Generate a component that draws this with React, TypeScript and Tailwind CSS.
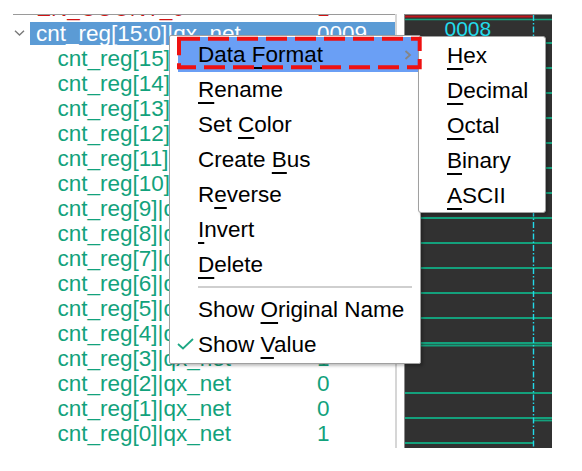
import React from "react";

type Sig = { name: string; value: string };

const bits: Sig[] = [
  { name: "cnt_reg[15]|qx_net", value: "0" },
  { name: "cnt_reg[14]|qx_net", value: "0" },
  { name: "cnt_reg[13]|qx_net", value: "0" },
  { name: "cnt_reg[12]|qx_net", value: "0" },
  { name: "cnt_reg[11]|qx_net", value: "0" },
  { name: "cnt_reg[10]|qx_net", value: "0" },
  { name: "cnt_reg[9]|qx_net", value: "0" },
  { name: "cnt_reg[8]|qx_net", value: "0" },
  { name: "cnt_reg[7]|qx_net", value: "0" },
  { name: "cnt_reg[6]|qx_net", value: "0" },
  { name: "cnt_reg[5]|qx_net", value: "0" },
  { name: "cnt_reg[4]|qx_net", value: "0" },
  { name: "cnt_reg[3]|qx_net", value: "1" },
  { name: "cnt_reg[2]|qx_net", value: "0" },
  { name: "cnt_reg[1]|qx_net", value: "0" },
  { name: "cnt_reg[0]|qx_net", value: "1" },
];

// y of the low level line for each bit that stays 0
const lows = [68, 93, 118, 143, 168, 193, 218, 243, 268, 293, 318, 343, 393, 418];

function Mn({ children }: { children: React.ReactNode }) {
  return <span className="underline underline-offset-[5px] decoration-[1.6px]">{children}</span>;
}

function Item({ children, active }: { children: React.ReactNode; active?: boolean }) {
  return (
    <div
      className={`relative h-[35px] leading-[35px] whitespace-nowrap ${
        active ? "ml-[8px] pl-[20px] bg-[#6a9ff5]" : "pl-[28px]"
      }`}
    >
      {children}
    </div>
  );
}

function SignalList() {
  return (
    <div className="ml-[13px] w-[382px] border-t border-[#9a9a9a] overflow-hidden">
      <div className="-mt-[19px] text-[22.5px] leading-[25px]">
        <div className="h-[25px] flex text-[#d01414]">
          <div className="w-[304px] pl-[23px] whitespace-nowrap">EN_COUNT_0</div>
          <div>1</div>
        </div>
        <div className="h-[25px] py-[1px] flex">
          <div className="w-[17px] pl-[1px] pt-[8px]">
            <svg width="11" height="6" viewBox="0 0 11 6">
              <polyline points="1,0.8 5.5,5 10,0.8" fill="none" stroke="#7a7a7a" strokeWidth="1.4" />
            </svg>
          </div>
          <div className="flex-1 flex bg-[#5b9bd5] text-white leading-[23px]">
            <div className="w-[287px] pl-[6px] whitespace-nowrap">cnt_reg[15:0]|qx_net</div>
            <div>0009</div>
          </div>
        </div>
        {bits.map((b) => (
          <div key={b.name} className="h-[25px] flex text-[#12a27c]">
            <div className="w-[304px] pl-[44.5px] whitespace-nowrap">{b.name}</div>
            <div>{b.value}</div>
          </div>
        ))}
      </div>
    </div>
  );
}

function Waveform() {
  return (
    <div className="relative ml-[7px] w-[148px] bg-[#313131] border-t border-l border-[#8a8a8a] overflow-hidden">
      <svg className="absolute inset-0" width="147" height="433" viewBox="405 15 147 433">
        <line x1="405" y1="16.5" x2="533" y2="16.5" stroke="#c0161c" strokeWidth="2" />
        <line x1="405" y1="19.5" x2="552" y2="19.5" stroke="#14a07c" strokeWidth="1.6" />
        <line x1="405" y1="43" x2="552" y2="43" stroke="#14a07c" strokeWidth="1.8" />
        {lows.map((y) => (
          <line key={y} x1="405" y1={y} x2="552" y2={y} stroke="#14a07c" strokeWidth="1.8" />
        ))}
        <line x1="405" y1="345.5" x2="552" y2="345.5" stroke="#14a07c" strokeWidth="1.8" />
        <line x1="405" y1="443" x2="533" y2="443" stroke="#14a07c" strokeWidth="1.8" />
        <line x1="533" y1="420.5" x2="552" y2="420.5" stroke="#14a07c" strokeWidth="1.8" />
        <line x1="533.5" y1="15" x2="533.5" y2="448" stroke="#22d8e8" strokeWidth="1.4" strokeDasharray="6 2 1.5 2" />
      </svg>
      <div className="absolute left-[39.5px] top-[3px] text-[21px] leading-[21px] text-[#22dcec]">0008</div>
    </div>
  );
}

export default function App() {
  return (
    <div className="relative w-[582px] h-[471px] bg-white overflow-hidden font-['Liberation_Sans',Arial,sans-serif]">
      <div className="flex h-[448px] pt-[14px]">
        <SignalList />
        <div className="w-[2px] bg-[#d6d6d6]" />
        <Waveform />
      </div>

      {/* context menu */}
      <div className="absolute left-[169px] top-[35px] w-[252px] h-[329px] pt-[1px] bg-white border border-[#a0a0a0] rounded-[2px] shadow-[2px_2px_3px_rgba(0,0,0,0.25)] text-[22.5px] text-black">
        <Item active>
          Data <Mn>F</Mn>ormat
          <svg className="absolute left-[226px] top-[13px]" width="8" height="10" viewBox="0 0 8 10">
            <polyline points="1.5,1 6,5 1.5,9" fill="none" stroke="#858585" strokeWidth="1.8" />
          </svg>
        </Item>
        <Item>
          <Mn>R</Mn>ename
        </Item>
        <Item>
          Set <Mn>C</Mn>olor
        </Item>
        <Item>
          Create <Mn>B</Mn>us
        </Item>
        <Item>
          R<Mn>e</Mn>verse
        </Item>
        <Item>
          <Mn>I</Mn>nvert
        </Item>
        <Item>
          <Mn>D</Mn>elete
        </Item>
        <div className="h-[10px] flex items-center pl-[28px] pr-[8px]">
          <div className="h-[2px] flex-1 bg-[#cfcfcf]" />
        </div>
        <Item>
          Show <Mn>O</Mn>riginal Name
        </Item>
        <Item>
          <svg className="absolute left-[7px] top-[11px]" width="17" height="12" viewBox="0 0 17 12">
            <polyline points="1,6 6,10.5 16,1" fill="none" stroke="#1ea884" strokeWidth="1.8" />
          </svg>
          Show <Mn>V</Mn>alue
        </Item>
      </div>

      {/* sub menu */}
      <div className="absolute left-[418px] top-[36px] w-[128px] h-[177px] pt-[1px] bg-white border border-[#a0a0a0] rounded-[3px] shadow-[2px_2px_3px_rgba(0,0,0,0.25)] text-[22.5px] text-black">
        <Item>
          <Mn>H</Mn>ex
        </Item>
        <Item>
          <Mn>D</Mn>ecimal
        </Item>
        <Item>
          <Mn>O</Mn>ctal
        </Item>
        <Item>
          <Mn>B</Mn>inary
        </Item>
        <Item>
          <Mn>A</Mn>SCII
        </Item>
      </div>

      {/* red dashed annotation */}
      <svg className="absolute left-[175px] top-[35px]" width="250" height="38" viewBox="0 0 250 38">
        <rect x="4" y="3.7" width="240.7" height="28.6" fill="none" stroke="#ee1111" strokeWidth="4" strokeDasharray="21 8" />
      </svg>
    </div>
  );
}
